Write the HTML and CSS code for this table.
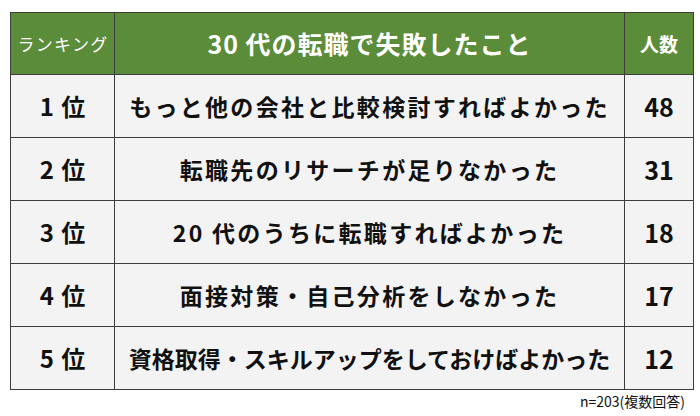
FILE: index.html
```html
<!DOCTYPE html>
<html lang="ja">
<head>
<meta charset="utf-8">
<link rel="stylesheet" href="styles.css">
</head>
<body>
<div class="wrap">
  <table class="rank">
    <thead>
      <tr>
        <th class="c1 small">ランキング</th>
        <th class="c2 title">30 代の転職で失敗したこと</th>
        <th class="c3 mid">人数</th>
      </tr>
    </thead>
    <tbody>
      <tr><td class="pos">1 位</td><td class="txt">もっと他の会社と比較検討すればよかった</td><td class="num">48</td></tr>
      <tr><td class="pos">2 位</td><td class="txt">転職先のリサーチが足りなかった</td><td class="num">31</td></tr>
      <tr><td class="pos">3 位</td><td class="txt">20 代のうちに転職すればよかった</td><td class="num">18</td></tr>
      <tr><td class="pos">4 位</td><td class="txt">面接対策・自己分析をしなかった</td><td class="num">17</td></tr>
      <tr><td class="pos">5 位</td><td class="txt tight">資格取得・スキルアップをしておけばよかった</td><td class="num">12</td></tr>
    </tbody>
  </table>
  <p class="note">n=203(複数回答)</p>
</div>
</body>
</html>
```
FILE: styles.css
```css
html, body {
  margin: 0;
  padding: 0;
  background: #ffffff;
}
body {
  font-family: "Noto Sans CJK JP", "Noto Sans", sans-serif;
  color: #111111;
}
.wrap {
  padding: 12px 6px 0 10px;
  width: 684px;
}
.rank {
  border-collapse: collapse;
  width: 684px;
  table-layout: fixed;
}
.rank th, .rank td {
  border: 1px solid #3c3c3c;
  text-align: center;
  vertical-align: middle;
  padding: 0;
  line-height: 1;
  white-space: nowrap;
}
.rank th {
  background: #5b8c3a;
  color: #ffffff;
  height: 61px;
}
.rank td {
  background: #f3f3f3;
  height: 62px;
  font-weight: 700;
}
.c1 { width: 103px; }
.c3 { width: 68px; }
.small {
  font-size: 17px;
  font-weight: 400;
  letter-spacing: 1.3px;
  text-indent: 1px;
}
.title {
  font-size: 25px;
  font-weight: 700;
  letter-spacing: 1px;
}
.mid {
  font-size: 19px;
  font-weight: 700;
}
.pos {
  font-size: 24px;
  word-spacing: 2px;
}
.txt {
  font-size: 23px;
  letter-spacing: 2.3px;
}
.txt.tight {
  letter-spacing: 0;
}
.num {
  font-size: 25px;
}
.note {
  margin: 3px 0 0 0;
  text-align: right;
  font-size: 14px;
  line-height: 1.2;
  padding-right: 9px;
}
```
